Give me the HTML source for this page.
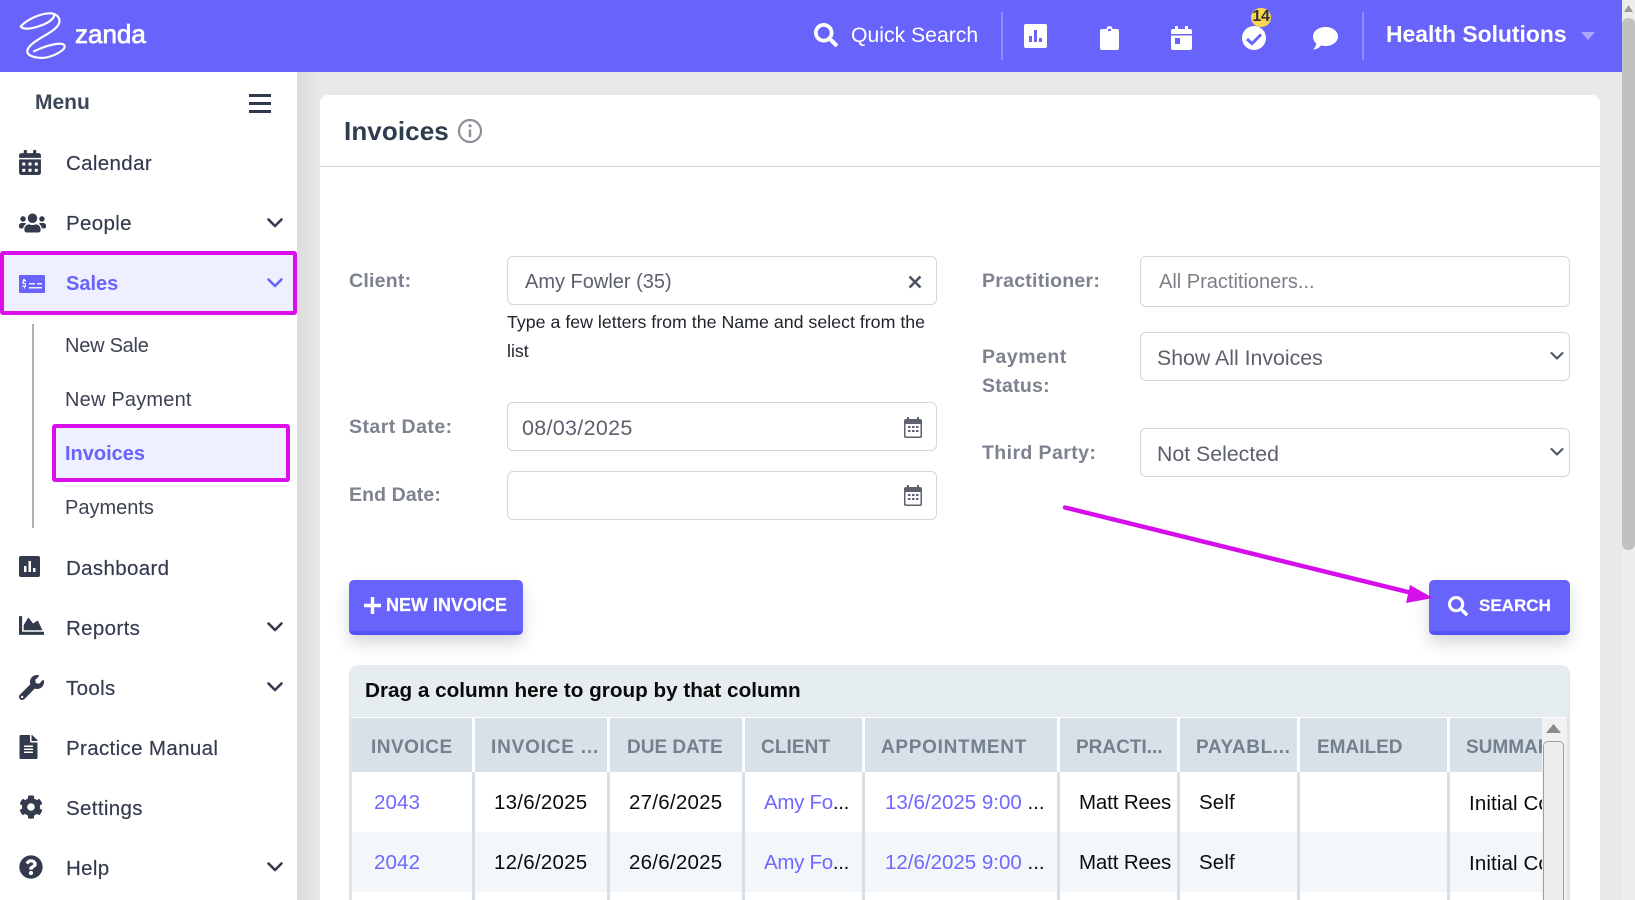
<!DOCTYPE html>
<html lang="en">
<head>
<meta charset="utf-8">
<title>Invoices - zanda</title>
<style>
html,body{margin:0;padding:0;width:1635px;height:900px;overflow:hidden;background:#e9e9e9;font-family:"Liberation Sans",sans-serif}
*{box-sizing:border-box}
.a,.t{position:absolute}
.t{white-space:nowrap;line-height:24px;height:24px;margin-top:-11px}
svg{position:absolute;display:block;overflow:visible}
header{position:absolute;left:0;top:0;width:1622px;height:72px;background:#6864fb}
header .t{color:#fff}
.sep{position:absolute;top:12px;width:2px;height:48px;background:#8f8cfc}
aside{position:absolute;left:0;top:72px;width:297px;height:828px;background:#fff}
.shadow{position:absolute;left:297px;top:72px;width:24px;height:828px;background:linear-gradient(90deg,#dcdcdc,#e9e9e9)}
.nav{font-size:20.5px;letter-spacing:.35px;color:#343a4e;-webkit-text-stroke:.15px #343a4e}
.sub{font-size:20px;letter-spacing:.3px;color:#3d4252}
.ic{fill:#343a4e}
.chev{fill:none;stroke:#343a4e;stroke-width:2.6;stroke-linecap:round;stroke-linejoin:round}
.hl{position:absolute;background:#eeefff;border:4px solid #d90eea;border-radius:3px}
.card{position:absolute;left:320px;top:95px;width:1280px;height:805px;background:#fff;border-radius:8px 8px 0 0}
.lab{font-size:19.5px;font-weight:bold;color:#7d828f;letter-spacing:.25px}
.inp{position:absolute;background:#fff;border:1.5px solid #d6d6d6;border-radius:6px}
.val{font-size:20.5px;color:#5b606c;letter-spacing:0}
.btn{position:absolute;top:580px;height:55px;background:#6864fb;border-bottom:4px solid #5552fb;border-radius:5px;box-shadow:0 8px 16px rgba(0,0,0,.16)}
.btx{font-size:18px;font-weight:bold;color:#fff}
.hc{position:absolute;top:718px;height:54px;background:#d7e1e7}
.bs{position:absolute;top:772px;height:128px;width:3px;background:#d6e0e6}
.th{font-size:19px;font-weight:bold;color:#75808f;top:747px}
.td{font-size:20.5px;color:#0b0b0b;letter-spacing:.12px}
.lk{color:#6f68ff}
</style>
</head>
<body>
<header>
  <svg style="left:10px;top:6px" width="140" height="60" viewBox="0 0 420 180"><path d="M32 62C50 40 95 20 125 22C140 24 132 42 100 56C75 66 45 74 32 62M125 22C150 28 158 48 135 68C110 90 55 110 52 135C50 150 80 158 105 155C135 150 170 130 163 118C155 105 105 120 72 136" fill="none" stroke="#fff" stroke-width="6.500" stroke-linecap="round" stroke-linejoin="round"/></svg>
  <div class="t" style="left:75px;top:33px;font-size:26px;-webkit-text-stroke:.7px #fff">zanda</div>
  <svg style="left:814px;top:23px" width="24" height="24" viewBox="0 0 512 512"><path fill="#fff" d="M505 442.700L405.300 343c-4.500-4.500-10.600-7-17-7H372c27.600-35.300 44-79.700 44-128C416 93.100 322.900 0 208 0S0 93.100 0 208s93.100 208 208 208c48.300 0 92.700-16.400 128-44v16.300c0 6.400 2.500 12.500 7 17l99.700 99.700c9.400 9.400 24.600 9.400 33.900 0l28.300-28.300c9.400-9.400 9.400-24.600.1-34zM208 336c-70.700 0-128-57.200-128-128 0-70.700 57.200-128 128-128 70.700 0 128 57.200 128 128 0 70.700-57.200 128-128 128z"/></svg>
  <div class="t" style="left:851px;top:35px;font-size:21.2px">Quick Search</div>
  <div class="sep" style="left:1001px"></div>
  <svg style="left:1024px;top:24px" width="23" height="24" viewBox="0 0 23 24"><path fill="#fff" fill-rule="evenodd" d="M2 0h19a2 2 0 0 1 2 2v20a2 2 0 0 1-2 2H2a2 2 0 0 1-2-2V2a2 2 0 0 1 2-2zM5 12v6h3v-6zM10 6v12h3V6zM15 14v4h3v-4z"/></svg>
  <svg style="left:1100px;top:26px" width="19" height="24" viewBox="0 0 19 24"><path fill="#fff" fill-rule="evenodd" d="M6.500 3a3 3 0 0 1 6 0H17a2 2 0 0 1 2 2v17a2 2 0 0 1-2 2H2a2 2 0 0 1-2-2V5a2 2 0 0 1 2-2zM8 3h3v2H8z"/></svg>
  <svg style="left:1171px;top:26px" width="21" height="24" viewBox="0 0 21 24"><path fill="#fff" fill-rule="evenodd" d="M4 0h3v3h7V0h3v3h2a2 2 0 0 1 2 2v3H0V5a2 2 0 0 1 2-2h2zM0 9.500h21V22a2 2 0 0 1-2 2H2a2 2 0 0 1-2-2zM4 12v6h5v-6z"/></svg>
  <svg style="left:1242px;top:26px" width="24" height="24" viewBox="0 0 24 24"><circle cx="12" cy="12" r="12" fill="#fff"/><path d="M5 13l5 4.500 9-9" fill="none" stroke="#6864fb" stroke-width="3"/></svg>
  <div class="a" style="left:1251px;top:8px;width:20px;height:19px;border-radius:10px;background:#f9d64f"></div>
  <div class="t" style="left:1252px;top:16px;font-size:16px;font-weight:bold;color:#333;letter-spacing:-.3px;width:18px;text-align:center">14</div>
  <svg style="left:1313px;top:27px" width="25" height="23" viewBox="0 0 25 23"><path fill="#fff" d="M12.500 0C19.400 0 25 4 25 9.500S19.400 19 12.500 19c-1.500 0-3-.2-4.300-.6C6.500 20.500 3.500 22.500 0 22.500c1.800-1.500 3-3.500 3.300-6C1.200 14.800 0 12.300 0 9.500 0 4 5.600 0 12.500 0z"/></svg>
  <div class="sep" style="left:1362px"></div>
  <div class="t" style="left:1386px;top:33px;font-size:22.900px;font-weight:bold">Health Solutions</div>
  <svg style="left:1581px;top:32px" width="14" height="8" viewBox="0 0 14 8"><path fill="#a9a6fc" d="M0 0h14L7 8z"/></svg>
</header>

<div class="shadow"></div>
<aside></aside>
<div class="t" style="left:35px;top:102px;font-size:21px;font-weight:bold;color:#3b4658">Menu</div>
<svg style="left:249px;top:94px" width="22" height="19" viewBox="0 0 22 19"><path d="M0 1.500h22M0 9.500h22M0 17.500h22" stroke="#343a4e" stroke-width="3"/></svg>

<svg class="ic" style="left:19px;top:150px" width="22" height="25" viewBox="0 0 448 512"><path d="M0 464c0 26.500 21.500 48 48 48h352c26.500 0 48-21.500 48-48V192H0v272zm320-196c0-6.600 5.400-12 12-12h40c6.600 0 12 5.400 12 12v40c0 6.600-5.400 12-12 12h-40c-6.600 0-12-5.400-12-12v-40zm0 128c0-6.600 5.400-12 12-12h40c6.600 0 12 5.400 12 12v40c0 6.600-5.400 12-12 12h-40c-6.600 0-12-5.400-12-12v-40zM192 268c0-6.600 5.400-12 12-12h40c6.600 0 12 5.400 12 12v40c0 6.600-5.400 12-12 12h-40c-6.600 0-12-5.400-12-12v-40zm0 128c0-6.600 5.400-12 12-12h40c6.600 0 12 5.400 12 12v40c0 6.600-5.400 12-12 12h-40c-6.600 0-12-5.400-12-12v-40zM64 268c0-6.600 5.400-12 12-12h40c6.600 0 12 5.400 12 12v40c0 6.600-5.400 12-12 12H76c-6.600 0-12-5.400-12-12v-40zm0 128c0-6.600 5.400-12 12-12h40c6.600 0 12 5.400 12 12v40c0 6.600-5.400 12-12 12H76c-6.600 0-12-5.400-12-12v-40zM400 64h-48V16c0-8.800-7.200-16-16-16h-32c-8.800 0-16 7.200-16 16v48H160V16c0-8.800-7.200-16-16-16h-32c-8.800 0-16 7.200-16 16v48H48C21.500 64 0 85.500 0 112v48h448v-48c0-26.500-21.500-48-48-48z"/></svg>
<div class="t nav" style="left:66px;top:163px">Calendar</div>

<svg class="ic" style="left:19px;top:211px" width="27" height="24" viewBox="0 0 640 512"><path d="M96 224c35.300 0 64-28.700 64-64s-28.700-64-64-64-64 28.700-64 64 28.700 64 64 64zm448 0c35.300 0 64-28.700 64-64s-28.700-64-64-64-64 28.700-64 64 28.700 64 64 64zm32 32h-64c-17.600 0-33.500 7.100-45.100 18.600 40.300 22.100 68.900 62 75.100 109.400h66c17.700 0 32-14.300 32-32v-32c0-35.300-28.700-64-64-64zm-256 0c61.900 0 112-50.100 112-112S381.900 32 320 32 208 82.100 208 144s50.100 112 112 112zm76.800 32h-8.300c-20.800 10-43.900 16-68.500 16s-47.600-6-68.500-16h-8.300C179.600 288 128 339.600 128 403.200V432c0 26.500 21.500 48 48 48h288c26.500 0 48-21.500 48-48v-28.800c0-63.600-51.600-115.200-115.200-115.200zm-223.700-13.400C161.500 263.100 145.600 256 128 256H64c-35.300 0-64 28.700-64 64v32c0 17.700 14.300 32 32 32h65.900c6.300-47.400 34.900-87.300 75.200-109.400z"/></svg>
<div class="t nav" style="left:66px;top:223px">People</div>
<svg class="chev" style="left:267px;top:217px" width="16" height="12" viewBox="0 0 16 12"><path d="M1.500 2.500L8 9l6.500-6.500"/></svg>

<div class="hl" style="left:0;top:251px;width:297px;height:64px"></div>
<svg style="left:19px;top:275px" width="26" height="18" viewBox="0 0 26 18"><path fill="#6864fb" fill-rule="evenodd" d="M1 0h24a1 1 0 0 1 1 1v16a1 1 0 0 1-1 1H1a1 1 0 0 1-1-1V1a1 1 0 0 1 1-1zM10 8v1.500h6V8zM18 8v1.500h5V8zM10 12v1.500h13V12zM4 4v1.500h-.5v3.500H6v1.500H3.500V12h1.500v1.500H6V12h1V8H5V6.500h2V5H6V4z"/></svg>
<div class="t nav" style="left:66px;top:283px;font-weight:bold;color:#6864fb;-webkit-text-stroke:0;letter-spacing:0;font-size:20px">Sales</div>
<svg class="chev" style="left:267px;top:277px;stroke:#6864fb" width="16" height="12" viewBox="0 0 16 12"><path d="M1.500 2.500L8 9l6.500-6.500"/></svg>

<div class="a" style="left:32px;top:324px;width:1.500px;height:204px;background:#b0b0b8"></div>
<div class="t sub" style="left:65px;top:345px;letter-spacing:-.25px">New Sale</div>
<div class="t sub" style="left:65px;top:399px;letter-spacing:.2px">New Payment</div>
<div class="hl" style="left:52px;top:424px;width:238px;height:58px"></div>
<div class="t sub" style="left:65px;top:453px;font-weight:bold;color:#6864fb;letter-spacing:0">Invoices</div>
<div class="t sub" style="left:65px;top:507px;letter-spacing:0">Payments</div>

<svg class="ic" style="left:19px;top:556px" width="21" height="21" viewBox="0 0 21 21"><path fill-rule="evenodd" d="M2 0h17a2 2 0 0 1 2 2v17a2 2 0 0 1-2 2H2a2 2 0 0 1-2-2V2a2 2 0 0 1 2-2zM5 10v6h2.500v-6zM9.500 5v11H12V5zM14 12v4h2.500v-4z"/></svg>
<div class="t nav" style="left:66px;top:568px">Dashboard</div>

<svg class="ic" style="left:19px;top:613px" width="25" height="25" viewBox="0 0 512 512"><path d="M500 384c6.600 0 12 5.400 12 12v40c0 6.600-5.400 12-12 12H12c-6.600 0-12-5.400-12-12V76c0-6.600 5.400-12 12-12h40c6.600 0 12 5.400 12 12v308h436zM372.700 159.500L288 216l-85.300-113.700c-5.100-6.800-15.500-6.300-19.900 1L96 248v104h384l-89.900-187.800c-3.200-6.500-11.400-8.700-17.400-4.700z"/></svg>
<div class="t nav" style="left:66px;top:628px">Reports</div>
<svg class="chev" style="left:267px;top:621px" width="16" height="12" viewBox="0 0 16 12"><path d="M1.500 2.500L8 9l6.500-6.500"/></svg>

<svg class="ic" style="left:19px;top:675px" width="25" height="25" viewBox="0 0 512 512"><path d="M507.730 109.100c-2.240-9.030-13.540-12.090-20.120-5.510l-74.360 74.360-67.880-11.310-11.310-67.880 74.360-74.360c6.620-6.620 3.430-17.900-5.660-20.160-47.380-11.740-99.550.91-136.580 37.930-39.640 39.640-50.550 97.100-34.050 147.200L18.740 402.760c-24.990 24.990-24.990 65.510 0 90.500 24.990 24.990 65.510 24.990 90.500 0l213.210-213.210c50.120 16.710 107.470 5.680 147.370-34.220 37.070-37.070 49.700-89.320 37.910-136.730zM64 472c-13.250 0-24-10.750-24-24 0-13.260 10.750-24 24-24s24 10.740 24 24c0 13.250-10.750 24-24 24z"/></svg>
<div class="t nav" style="left:66px;top:688px">Tools</div>
<svg class="chev" style="left:267px;top:681px" width="16" height="12" viewBox="0 0 16 12"><path d="M1.500 2.500L8 9l6.500-6.500"/></svg>

<svg class="ic" style="left:19px;top:735px" width="19" height="24" viewBox="0 0 384 512"><path d="M224 136V0H24C10.700 0 0 10.700 0 24v464c0 13.300 10.700 24 24 24h336c13.300 0 24-10.700 24-24V160H248c-13.200 0-24-10.800-24-24zm64 236c0 6.600-5.400 12-12 12H108c-6.600 0-12-5.400-12-12v-8c0-6.600 5.400-12 12-12h168c6.600 0 12 5.400 12 12v8zm0-64c0 6.600-5.400 12-12 12H108c-6.600 0-12-5.400-12-12v-8c0-6.600 5.400-12 12-12h168c6.600 0 12 5.400 12 12v8zm0-72v8c0 6.600-5.400 12-12 12H108c-6.600 0-12-5.400-12-12v-8c0-6.600 5.400-12 12-12h168c6.600 0 12 5.400 12 12zm96-114.100v6.100H256V0h6.100c6.400 0 12.500 2.500 17 7l97.900 98c4.500 4.500 7 10.600 7 16.900z"/></svg>
<div class="t nav" style="left:66px;top:748px">Practice Manual</div>

<svg class="ic" style="left:19px;top:795px" width="24" height="24" viewBox="0 0 512 512"><path d="M487.400 315.700l-42.600-24.600c4.300-23.200 4.300-47 0-70.200l42.600-24.600c4.900-2.800 7.100-8.600 5.500-14-11.100-35.600-30-67.800-54.700-94.600-3.800-4.100-10-5.100-14.800-2.300L380.800 110c-17.900-15.400-38.500-27.300-60.800-35.100V25.800c0-5.600-3.900-10.500-9.400-11.700-36.700-8.200-74.300-7.800-109.200 0-5.500 1.200-9.400 6.100-9.400 11.700V75c-22.200 7.900-42.800 19.800-60.800 35.100L88.700 85.500c-4.900-2.800-11-1.900-14.800 2.300-24.700 26.700-43.600 58.900-54.700 94.600-1.700 5.400.6 11.200 5.500 14L67.300 221c-4.300 23.200-4.300 47 0 70.200l-42.600 24.600c-4.900 2.800-7.100 8.600-5.500 14 11.100 35.600 30 67.800 54.700 94.600 3.800 4.100 10 5.100 14.800 2.300l42.600-24.600c17.900 15.400 38.500 27.300 60.800 35.100v49.200c0 5.600 3.900 10.500 9.400 11.700 36.700 8.200 74.300 7.800 109.200 0 5.500-1.200 9.400-6.100 9.400-11.700v-49.200c22.200-7.900 42.800-19.800 60.800-35.100l42.600 24.600c4.900 2.800 11 1.900 14.800-2.300 24.700-26.700 43.600-58.900 54.700-94.600 1.500-5.500-.7-11.300-5.600-14.100zM256 336c-44.100 0-80-35.900-80-80s35.900-80 80-80 80 35.900 80 80-35.900 80-80 80z"/></svg>
<div class="t nav" style="left:66px;top:808px">Settings</div>

<svg class="ic" style="left:19px;top:855px" width="24" height="24" viewBox="0 0 512 512"><path d="M504 256c0 136.997-111.043 248-248 248S8 392.997 8 256C8 119.083 119.043 8 256 8s248 111.083 248 248zM262.655 90c-54.497 0-89.255 22.957-116.549 63.758-3.536 5.286-2.353 12.415 2.715 16.258l34.699 26.310c5.205 3.947 12.621 3.008 16.665-2.122 17.864-22.658 30.113-35.797 57.303-35.797 20.429 0 45.698 13.148 45.698 32.958 0 14.976-12.363 22.667-32.534 33.976C247.128 238.528 216 254.941 216 296v4c0 6.627 5.373 12 12 12h56c6.627 0 12-5.373 12-12v-1.333c0-28.462 83.186-29.647 83.186-106.667 0-58.002-60.165-102-116.531-102zM256 338c-25.365 0-46 20.635-46 46 0 25.364 20.635 46 46 46s46-20.636 46-46c0-25.365-20.635-46-46-46z"/></svg>
<div class="t nav" style="left:66px;top:868px">Help</div>
<svg class="chev" style="left:267px;top:861px" width="16" height="12" viewBox="0 0 16 12"><path d="M1.500 2.500L8 9l6.500-6.500"/></svg>

<div class="card"></div>
<div class="a" style="left:320px;top:166px;width:1280px;height:1px;background:#d4d4d4"></div>
<div class="t" style="left:344px;top:130px;font-size:26px;font-weight:bold;color:#2f3b4f;letter-spacing:.1px">Invoices</div>
<svg style="left:457px;top:118px" width="26" height="26" viewBox="0 0 26 26"><circle cx="13" cy="13" r="11" fill="none" stroke="#8b9096" stroke-width="2.200"/><path d="M13 11.500v7.500" stroke="#8b9096" stroke-width="2.400" fill="none"/><circle cx="13" cy="7.800" r="1.600" fill="#8b9096"/></svg>

<div class="t lab" style="left:349px;top:280px">Client:</div>
<div class="inp" style="left:507px;top:256px;width:430px;height:49px"></div>
<div class="t val" style="left:525px;top:281px;font-size:20px">Amy Fowler (35)</div>
<svg style="left:908px;top:275px" width="14" height="14" viewBox="0 0 14 14"><path d="M1.500 1.500l11 11M12.500 1.500l-11 11" stroke="#4b5363" stroke-width="2.600"/></svg>
<div class="t" style="left:507px;top:321px;font-size:17.800px;color:#20242c">Type a few letters from the Name and select from the</div>
<div class="t" style="left:507px;top:350px;font-size:17.800px;color:#20242c">list</div>

<div class="t lab" style="left:349px;top:426px;letter-spacing:.45px">Start Date:</div>
<div class="inp" style="left:507px;top:402px;width:430px;height:49px"></div>
<div class="t val" style="left:522px;top:427px;font-size:21.500px;letter-spacing:.3px">08/03/2025</div>
<svg style="left:904px;top:417px" width="18" height="21" viewBox="0 0 18 21"><path fill="#5e6270" fill-rule="evenodd" d="M3 0h2v2h8V0h2v2h1a2 2 0 0 1 2 2v15a2 2 0 0 1-2 2H2a2 2 0 0 1-2-2V4a2 2 0 0 1 2-2h1zM1.500 7v11.500a1 1 0 0 0 1 1h13a1 1 0 0 0 1-1V7zM4 9h2.500v2H4zM8 9h2.500v2H8zM12 9h2.500v2H12zM4 13h2.500v2H4zM8 13h2.500v2H8zM12 13h2.500v2H12z"/></svg>

<div class="t lab" style="left:349px;top:494px;letter-spacing:.1px">End Date:</div>
<div class="inp" style="left:507px;top:471px;width:430px;height:49px"></div>
<svg style="left:904px;top:485px" width="18" height="21" viewBox="0 0 18 21"><path fill="#5e6270" fill-rule="evenodd" d="M3 0h2v2h8V0h2v2h1a2 2 0 0 1 2 2v15a2 2 0 0 1-2 2H2a2 2 0 0 1-2-2V4a2 2 0 0 1 2-2h1zM1.500 7v11.500a1 1 0 0 0 1 1h13a1 1 0 0 0 1-1V7zM4 9h2.500v2H4zM8 9h2.500v2H8zM12 9h2.500v2H12zM4 13h2.500v2H4zM8 13h2.500v2H8zM12 13h2.500v2H12z"/></svg>

<div class="t lab" style="left:982px;top:280px">Practitioner:</div>
<div class="inp" style="left:1140px;top:256px;width:430px;height:51px"></div>
<div class="t val" style="left:1159px;top:281px;color:#7b7f87;font-size:20px">All Practitioners...</div>
<div class="t lab" style="left:982px;top:356px;letter-spacing:.5px">Payment</div>
<div class="t lab" style="left:982px;top:385px">Status:</div>
<div class="inp" style="left:1140px;top:332px;width:430px;height:49px"></div>
<div class="t val" style="left:1157px;top:357px;font-size:21.300px">Show All Invoices</div>
<svg class="chev" style="left:1550px;top:351px;stroke:#4b5363;stroke-width:2" width="14" height="10" viewBox="0 0 14 10"><path d="M1.500 2L7 7.500 12.500 2"/></svg>
<div class="t lab" style="left:982px;top:452px;letter-spacing:.4px">Third Party:</div>
<div class="inp" style="left:1140px;top:428px;width:430px;height:49px"></div>
<div class="t val" style="left:1157px;top:453px;font-size:21.300px">Not Selected</div>
<svg class="chev" style="left:1550px;top:447px;stroke:#4b5363;stroke-width:2" width="14" height="10" viewBox="0 0 14 10"><path d="M1.500 2L7 7.500 12.500 2"/></svg>

<div class="btn" style="left:349px;width:174px"></div>
<svg style="left:364px;top:597px" width="17" height="17" viewBox="0 0 17 17"><path d="M8.500 0v17M0 8.500h17" stroke="#fff" stroke-width="3.400"/></svg>
<div class="t btx" style="left:386px;top:604px;-webkit-text-stroke:.2px #fff">NEW INVOICE</div>

<div class="btn" style="left:1429px;width:141px"></div>
<svg style="left:1448px;top:596px" width="20" height="20" viewBox="0 0 512 512"><path fill="#fff" d="M505 442.700L405.300 343c-4.500-4.500-10.600-7-17-7H372c27.600-35.300 44-79.700 44-128C416 93.100 322.900 0 208 0S0 93.100 0 208s93.100 208 208 208c48.300 0 92.700-16.400 128-44v16.300c0 6.400 2.500 12.500 7 17l99.700 99.700c9.400 9.400 24.600 9.400 33.900 0l28.300-28.300c9.400-9.400 9.400-24.600.1-34zM208 336c-70.700 0-128-57.200-128-128 0-70.700 57.200-128 128-128 70.700 0 128 57.200 128 128 0 70.700-57.200 128-128 128z"/></svg>
<div class="t btx" style="left:1479px;top:605px;font-size:17px;-webkit-text-stroke:.2px #fff">SEARCH</div>

<svg style="left:0;top:0" width="1635" height="900" viewBox="0 0 1635 900"><path d="M1065 507.500L1412 593" stroke="#d40fea" stroke-width="4.500" stroke-linecap="round"/><path d="M1433 598L1410 585 1406 603z" fill="#d40fea"/></svg>

<div class="a" style="left:349px;top:665px;width:1221px;height:235px;background:#fff;border-left:3px solid #dbe5ea;border-right:3px solid #dbe5ea;border-top:0;border-radius:10px 10px 0 0"></div>
<div class="a" style="left:350px;top:665px;width:1219px;height:52px;background:#e6edf0;border-radius:10px 10px 0 0"></div>
<div class="t" style="left:365px;top:690px;font-size:20.700px;font-weight:bold;color:#0a0a0a">Drag a column here to group by that column</div>

<div class="hc" style="left:352px;width:120px"></div>
<div class="hc" style="left:475px;width:132px"></div>
<div class="hc" style="left:610px;width:132px"></div>
<div class="hc" style="left:745px;width:117px"></div>
<div class="hc" style="left:865px;width:192px"></div>
<div class="hc" style="left:1060px;width:117px"></div>
<div class="hc" style="left:1180px;width:117px"></div>
<div class="hc" style="left:1300px;width:147px"></div>
<div class="hc" style="left:1450px;width:117px"></div>

<div class="a" style="left:352px;top:832px;width:1215px;height:60px;background:#f3f7fa"></div>
<div class="bs" style="left:472px"></div><div class="bs" style="left:607px"></div><div class="bs" style="left:742px"></div><div class="bs" style="left:862px"></div><div class="bs" style="left:1057px"></div><div class="bs" style="left:1177px"></div><div class="bs" style="left:1297px"></div><div class="bs" style="left:1447px"></div>

<div class="t th" style="left:371px;letter-spacing:.5px">INVOICE</div>
<div class="t th" style="left:491px;letter-spacing:.8px">INVOICE ...</div>
<div class="t th" style="left:627px">DUE DATE</div>
<div class="t th" style="left:761px;letter-spacing:.1px">CLIENT</div>
<div class="t th" style="left:881px;letter-spacing:.7px">APPOINTMENT</div>
<div class="t th" style="left:1076px">PRACTI...</div>
<div class="t th" style="left:1196px;letter-spacing:.6px">PAYABL...</div>
<div class="t th" style="left:1317px">EMAILED</div>
<div class="a" style="left:1466px;top:735px;width:76px;height:24px;overflow:hidden"><div class="t th" style="left:0;top:12px">SUMMARY</div></div>

<div class="t td lk" style="left:374px;top:802px">2043</div>
<div class="t td" style="left:494px;top:802px;letter-spacing:.25px">13/6/2025</div>
<div class="t td" style="left:629px;top:802px;letter-spacing:.25px">27/6/2025</div>
<div class="t td" style="left:764px;top:802px;letter-spacing:-.3px"><span class="lk">Amy Fo</span>...</div>
<div class="t td" style="left:885px;top:802px;letter-spacing:0"><span class="lk">13/6/2025 9:00</span> ...</div>
<div class="t td" style="left:1079px;top:802px;letter-spacing:-.15px">Matt Rees</div>
<div class="t td" style="left:1199px;top:802px">Self</div>
<div class="a" style="left:1469px;top:791px;width:73px;height:24px;overflow:hidden"><div class="t td" style="left:0;top:12px">Initial Consultation</div></div>

<div class="t td lk" style="left:374px;top:862px">2042</div>
<div class="t td" style="left:494px;top:862px;letter-spacing:.25px">12/6/2025</div>
<div class="t td" style="left:629px;top:862px;letter-spacing:.25px">26/6/2025</div>
<div class="t td" style="left:764px;top:862px;letter-spacing:-.3px"><span class="lk">Amy Fo</span>...</div>
<div class="t td" style="left:885px;top:862px;letter-spacing:0"><span class="lk">12/6/2025 9:00</span> ...</div>
<div class="t td" style="left:1079px;top:862px;letter-spacing:-.15px">Matt Rees</div>
<div class="t td" style="left:1199px;top:862px">Self</div>
<div class="a" style="left:1469px;top:851px;width:73px;height:24px;overflow:hidden"><div class="t td" style="left:0;top:12px">Initial Consultation</div></div>

<div class="a" style="left:1542px;top:718px;width:25px;height:182px;background:#f1f1f1"></div>
<svg style="left:1546px;top:724px" width="15" height="9" viewBox="0 0 15 9"><path fill="#8a8a8a" d="M0 9L7.500 0 15 9z"/></svg>
<div class="a" style="left:1543px;top:741px;width:21px;height:159px;background:#eee;border:1px solid #a0a0a0;border-bottom:0;border-radius:5px 5px 0 0"></div>

<div class="a" style="left:1622px;top:0;width:13px;height:900px;background:#ededed"></div>
<div class="a" style="left:1622px;top:18px;width:13px;height:532px;background:#c1c1c1;border-radius:6px"></div>
<svg style="left:1624px;top:5px" width="9" height="7" viewBox="0 0 9 7"><path fill="#9a9a9a" d="M0 7L4.500 0 9 7z"/></svg>
</body>
</html>
